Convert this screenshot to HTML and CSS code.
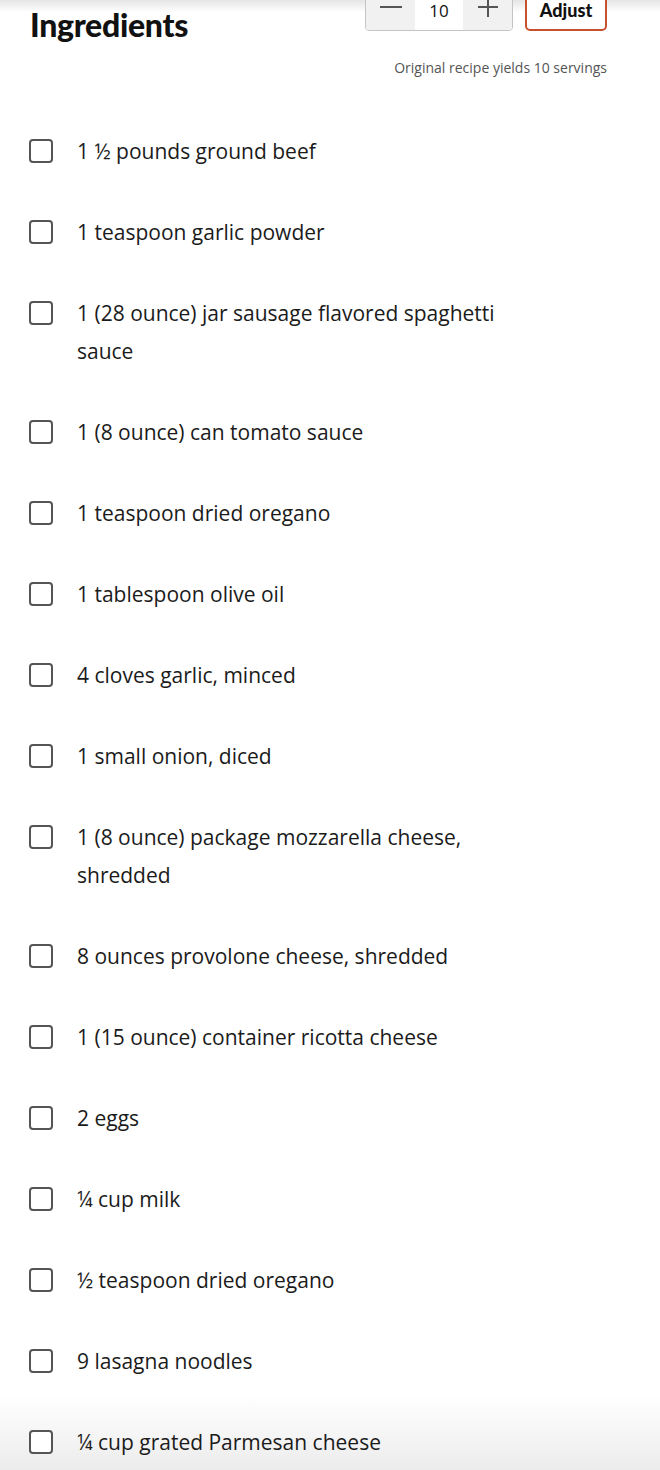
FILE: index.html
```html
<!DOCTYPE html>
<html lang="en">
<head>
<meta charset="utf-8">
<title>Ingredients</title>
<link rel="stylesheet" href="styles.css">
</head>
<body>
<div class="page">
  <div class="top-shadow"></div>
  <header class="header">
    <h2 class="title">Ingredients</h2>
    <div class="controls">
      <div class="control-row">
        <div class="stepper">
          <button class="step step-minus" aria-label="decrease">
            <svg width="22" height="4" viewBox="0 0 22 4"><rect x="0" y="1" width="22" height="2" fill="#555"/></svg>
          </button>
          <span class="step-value">10</span>
          <button class="step step-plus" aria-label="increase">
            <svg width="20" height="20" viewBox="0 0 20 20"><rect x="0" y="9" width="20" height="2" fill="#555"/><rect x="9" y="0" width="2" height="20" fill="#555"/></svg>
          </button>
        </div>
        <button class="adjust">Adjust</button>
      </div>
      <p class="yield">Original recipe yields 10 servings</p>
    </div>
  </header>
  <ul class="list">
    <li class="item"><span class="box"></span><span class="text">1 ½ pounds ground beef</span></li>
    <li class="item"><span class="box"></span><span class="text">1 teaspoon garlic powder</span></li>
    <li class="item"><span class="box"></span><span class="text">1 (28 ounce) jar sausage flavored spaghetti sauce</span></li>
    <li class="item"><span class="box"></span><span class="text">1 (8 ounce) can tomato sauce</span></li>
    <li class="item"><span class="box"></span><span class="text">1 teaspoon dried oregano</span></li>
    <li class="item"><span class="box"></span><span class="text">1 tablespoon olive oil</span></li>
    <li class="item"><span class="box"></span><span class="text">4 cloves garlic, minced</span></li>
    <li class="item"><span class="box"></span><span class="text">1 small onion, diced</span></li>
    <li class="item"><span class="box"></span><span class="text">1 (8 ounce) package mozzarella cheese, shredded</span></li>
    <li class="item"><span class="box"></span><span class="text">8 ounces provolone cheese, shredded</span></li>
    <li class="item"><span class="box"></span><span class="text">1 (15 ounce) container ricotta cheese</span></li>
    <li class="item"><span class="box"></span><span class="text">2 eggs</span></li>
    <li class="item"><span class="box"></span><span class="text">¼ cup milk</span></li>
    <li class="item"><span class="box"></span><span class="text">½ teaspoon dried oregano</span></li>
    <li class="item"><span class="box"></span><span class="text">9 lasagna noodles</span></li>
    <li class="item"><span class="box"></span><span class="text">¼ cup grated Parmesan cheese</span></li>
  </ul>
</div>
</body>
</html>
```

FILE: styles.css
```css
* { box-sizing: border-box; }
html, body { margin: 0; padding: 0; background: #fff; }
body {
  font-family: "Open Sans", "Liberation Sans", sans-serif;
  color: #1b1b1b;
  width: 660px;
  height: 1470px;
  overflow: hidden;
}
.page {
  position: relative;
  height: 1470px;
  padding: 0 53px 0 30px;
  background:
    linear-gradient(rgba(236,236,236,0) 0, rgba(236,236,236,0) 1395px, #ececec 1470px);
}
.top-shadow {
  position: absolute;
  left: 0; right: 0; top: 0;
  height: 12px;
  background: linear-gradient(#e4e4e4, rgba(255,255,255,0));
  z-index: 0;
}
.header {
  display: flex;
  justify-content: space-between;
  align-items: flex-start;
  position: relative;
  z-index: 1;
}
.title {
  margin: 6px 0 0 0;
  font-family: "Lato", sans-serif;
  font-weight: 900;
  font-size: 32px;
  line-height: 38px;
  letter-spacing: -0.3px;
  color: #111;
}
.controls {
  display: flex;
  flex-direction: column;
  align-items: flex-end;
  margin-top: -13px;
}
.control-row {
  display: flex;
  gap: 12px;
  align-items: flex-start;
}
.stepper {
  display: flex;
  width: 148px;
  height: 44px;
  border: 1px solid #c4c4c4;
  border-radius: 0 0 4px 4px;
  overflow: hidden;
}
.step {
  width: 49px;
  border: none;
  padding: 0 0 4px;
  margin: 0;
  background: #f1f1f1;
  display: flex;
  align-items: center;
  justify-content: center;
}
.step-value {
  flex: 1;
  display: flex;
  align-items: center;
  justify-content: center;
  padding-top: 2px;
  font-size: 17px;
  color: #111;
  background: #fff;
}
.adjust {
  width: 82px;
  height: 44px;
  border: 2px solid #c9502e;
  border-radius: 0 0 5px 5px;
  background: #fff;
  font-family: "Lato", sans-serif;
  font-weight: 900;
  font-size: 18px;
  color: #111;
  padding: 2px 0 0;
  margin: 0;
}
.yield {
  margin: 28px 0 0 0;
  font-size: 14px;
  line-height: 18px;
  color: #555;
}
.list {
  list-style: none;
  margin: 55px 0 0 0;
  padding: 0;
  display: flex;
  flex-direction: column;
  gap: 43px;
}
.item {
  display: flex;
  align-items: flex-start;
}
.box {
  flex: none;
  width: 24px;
  height: 24px;
  border: 2px solid #555;
  border-radius: 4px;
  margin: 7px 24px 0 -1px;
  background: #fff;
}
.text {
  font-size: 21px;
  line-height: 38px;
  max-width: 440px;
}
```
